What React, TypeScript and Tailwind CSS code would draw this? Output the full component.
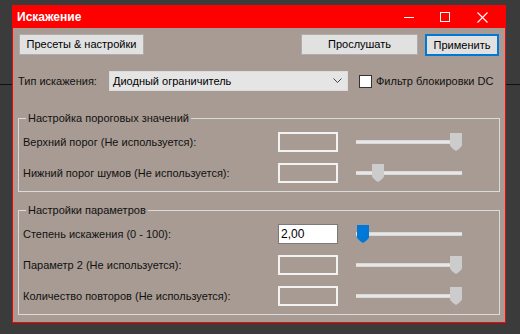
import React from 'react';

const font = { fontFamily: '"Liberation Sans", Arial, sans-serif' };

const Thumb: React.FC<{ active?: boolean }> = ({ active }) => (
  <svg width="12" height="18" viewBox="0 0 12 18" className="block">
    <path
      d="M0 0 H12 V12 Q12 14 6 18 Q0 14 0 12 Z"
      fill={active ? '#0078d7' : '#cccccc'}
    />
  </svg>
);

// pos: 0 = left end, 1 = right end
const Slider: React.FC<{ pos: number; active?: boolean }> = ({ pos, active }) => (
  <div className="relative w-[106px] h-[18px] flex items-center">
    <div className="w-full h-[4px] bg-[#e7e7e7] border-y border-[#d9d9d9]" />
    <div className="absolute top-0" style={{ left: `${pos * 94}px` }}>
      <Thumb active={active} />
    </div>
  </div>
);

const Row: React.FC<{ label: string; value?: string; pos: number; active?: boolean }> = ({
  label,
  value,
  pos,
  active,
}) => (
  <div className="flex items-center h-[20px]">
    <span className="w-[259px] pl-[4px] text-[11px] text-[#111]">{label}</span>
    {value !== undefined ? (
      <div className="w-[60px] h-[20px] bg-white border border-[#7a7a7a] text-[12px] leading-[18px] pl-[2px] text-black">
        {value}
      </div>
    ) : (
      <div className="w-[60px] h-[20px] border-2 border-[#f2f2f2]" />
    )}
    <div className="ml-[18px]">
      <Slider pos={pos} active={active} />
    </div>
  </div>
);

const Group: React.FC<{ title: string; className?: string; children: React.ReactNode }> = ({
  title,
  className,
  children,
}) => (
  <fieldset className={`mx-[5px] border border-[#dadada] px-0 pt-[7px] ${className ?? ''}`}>
    <legend className="ml-[7px] px-[2px] text-[11px] leading-[14px] text-[#111]">{title}</legend>
    {children}
  </fieldset>
);

export default function App() {
  return (
    <div className="w-[520px] h-[334px] bg-[#3b3b3b] flex items-start pt-[5px] overflow-hidden" style={font}>
      <div className="w-[12px] h-full">
        <div className="mt-[79px] h-[1px] bg-[#111]" />
      </div>

      <div className="w-[494px] h-[318px] border border-[#ff0000] bg-[#a89b93] flex flex-col">
        {/* title bar */}
        <div className="h-[22px] bg-[#ff0000] flex items-center text-white shrink-0">
          <span className="pl-[4px] font-bold text-[12px]">Искажение</span>
          <div className="ml-auto flex items-center h-full">
            <div className="w-[36px] flex justify-center">
              <div className="w-[10px] h-[1px] bg-white mt-[1px]" />
            </div>
            <div className="w-[36px] flex justify-center">
              <div className="w-[10px] h-[10px] border border-white" />
            </div>
            <div className="w-[42px] flex justify-center pr-[4px]">
              <svg width="11" height="11" viewBox="0 0 11 11">
                <path d="M0.5 0.5 L10.5 10.5 M10.5 0.5 L0.5 10.5" stroke="white" strokeWidth="1.1" />
              </svg>
            </div>
          </div>
        </div>

        {/* buttons */}
        <div className="flex items-start mt-[6px] px-[6px]">
          <button className="w-[125px] h-[21px] bg-[#e1e1e1] border border-[#adadad] text-[11px] text-black">
            Пресеты &amp; настройки
          </button>
          <button className="ml-auto w-[117px] h-[21px] bg-[#e1e1e1] border border-[#adadad] text-[11px] text-black">
            Прослушать
          </button>
          <button className="ml-[7px] w-[74px] h-[22px] bg-[#e1e1e1] border-2 border-[#0078d7] text-[11px] text-black">
            Применить
          </button>
        </div>

        {/* distortion type */}
        <div className="flex items-center mt-[15px] pl-[5px] h-[20px]">
          <span className="w-[91px] text-[11px] text-[#111]">Тип искажения:</span>
          <div className="w-[239px] h-[20px] bg-[#e5e5e5] border border-[#dcdcdc] flex items-center pl-[3px] text-[11px] text-black">
            Диодный ограничитель
            <svg width="9" height="6" viewBox="0 0 9 6" className="ml-auto mr-[5px]">
              <path d="M0.5 0.5 L4.5 4.5 L8.5 0.5" stroke="#444" fill="none" />
            </svg>
          </div>
          <div className="ml-[11px] w-[13px] h-[13px] bg-white border border-[#333]" />
          <span className="ml-[4px] text-[11px] text-[#111]">Фильтр блокировки DC</span>
        </div>

        {/* thresholds */}
        <Group title="Настройка пороговых значений" className="mt-[20px] pb-[8px]">
          <div className="flex flex-col gap-[11px]">
            <Row label="Верхний порог (Не используется):" pos={1} />
            <Row label="Нижний порог шумов (Не используется):" pos={0.17} />
          </div>
        </Group>

        {/* parameters */}
        <Group title="Настройки параметров" className="mt-[11px] pb-[8px]">
          <div className="flex flex-col gap-[11px]">
            <Row label="Степень искажения (0 - 100):" value="2,00" pos={0.01} active />
            <Row label="Параметр 2 (Не используется):" pos={1} />
            <Row label="Количество повторов (Не используется):" pos={1} />
          </div>
        </Group>
      </div>

      <div className="flex-1 h-full">
        <div className="mt-[79px] h-[1px] bg-[#111]" />
      </div>
    </div>
  );
}
